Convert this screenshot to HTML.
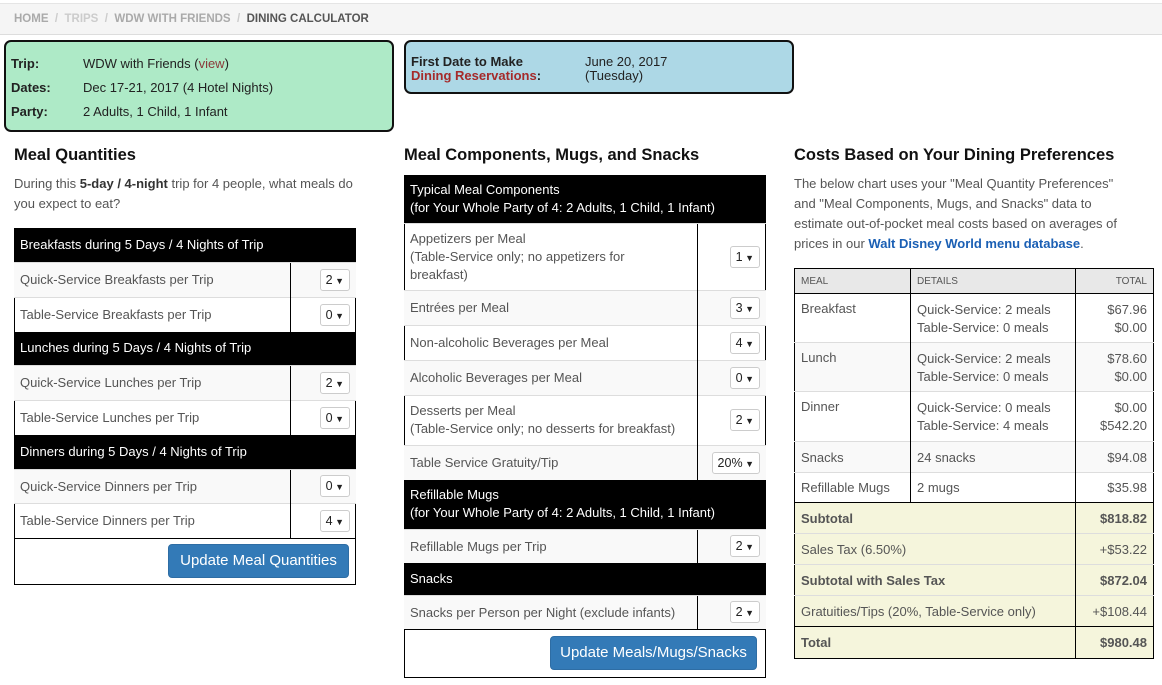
<!DOCTYPE html>
<html><head><meta charset="utf-8"><style>
*{box-sizing:border-box;margin:0;padding:0}
body{width:1162px;height:685px;overflow:hidden;background:#fff;font-family:"Liberation Sans",Arial,sans-serif;font-size:13px;color:#555;position:relative}
.a{position:absolute}
.bc{left:0;top:3px;width:1162px;height:32px;background:#f5f5f5;border-top:1px solid #e5e5e5;border-bottom:1px solid #ddd;font-size:11.5px;font-weight:bold;color:#aaa;padding:9px 0 0 14px;letter-spacing:0}
.bc b{color:#555}.bc .l{color:#ccc}
.box{border:2px solid #111;border-radius:7px;color:#222}
h2{position:absolute;font-size:16.5px;color:#111;font-weight:bold;top:146px}
.p{line-height:20px;color:#555}
table{border-collapse:collapse;position:absolute;table-layout:fixed}
td{vertical-align:middle;padding:0 6px}
.t td{border-top:1px solid #ddd}
tr.h td{background:#000;color:#fff;border:none;padding:0 6px;line-height:18px}
.sel{display:inline-block;border:1px solid #ccc;border-radius:3px;height:22px;line-height:20px;padding:0 5px;color:#222;background:#fff;font-size:12.5px;white-space:nowrap}
.sel:after{content:" \25BC";font-size:9px}
.btn{position:absolute;background:#337ab7;border:1px solid #2e6da4;border-radius:4px;color:#fff;font-size:15px;text-align:center;line-height:32px}
.c td.s{border-left:1px solid #000;text-align:right;padding-right:6px}
tr.g td{background:#f9f9f9}
.k td{border-top:1px solid #ddd;vertical-align:top;padding:7px 6px 0}
.k td+td{border-left:1px solid #000}
.k tr.y td{background:#f5f5dc;vertical-align:middle;padding-top:0}
</style></head><body>
<div class="a bc">HOME &nbsp;<span class="l">/</span>&nbsp; <span style="color:#ccc">TRIPS</span> &nbsp;<span class="l">/</span>&nbsp; WDW WITH FRIENDS &nbsp;<span class="l">/</span>&nbsp; <b>DINING CALCULATOR</b></div>

<div class="a box" style="left:4px;top:40px;width:390px;height:92px;background:#aeeac7">
<div class="a" style="left:5px;top:14px;font-weight:bold">Trip:</div><div class="a" style="left:77px;top:14px">WDW with Friends (<span style="color:#8b3a3a">view</span>)</div>
<div class="a" style="left:5px;top:38px;font-weight:bold">Dates:</div><div class="a" style="left:77px;top:38px">Dec 17-21, 2017 (4 Hotel Nights)</div>
<div class="a" style="left:5px;top:62px;font-weight:bold">Party:</div><div class="a" style="left:77px;top:62px">2 Adults, 1 Child, 1 Infant</div>
</div>
<div class="a box" style="left:404px;top:40px;width:390px;height:54px;background:#add8e6">
<div class="a" style="left:5px;top:13px;font-weight:bold;line-height:14px">First Date to Make<br><span style="color:#a52a2a">Dining Reservations</span>:</div>
<div class="a" style="left:179px;top:13px;line-height:14px">June 20, 2017<br>(Tuesday)</div>
</div>

<h2 style="left:14px">Meal Quantities</h2>
<h2 style="left:404px">Meal Components, Mugs, and Snacks</h2>
<h2 style="left:794px">Costs Based on Your Dining Preferences</h2>

<div class="a p" style="left:14px;top:174px;width:370px">During this <b style="color:#333">5-day / 4-night</b> trip for 4 people, what meals do<br>you expect to eat?</div>

<div class="a" style="left:14px;top:228px;width:342px;height:357px;border:1px solid #000"></div>
<table class="t c" style="left:14px;top:228px;width:342px">
<col style="width:276px"><col>
<tr class="h" style="height:34px"><td colspan="2">Breakfasts during 5 Days / 4 Nights of Trip</td></tr>
<tr class="g" style="height:35px"><td>Quick-Service Breakfasts per Trip</td><td class="s"><span class="sel">2</span></td></tr>
<tr style="height:35px"><td>Table-Service Breakfasts per Trip</td><td class="s"><span class="sel">0</span></td></tr>
<tr class="h" style="height:33px"><td colspan="2">Lunches during 5 Days / 4 Nights of Trip</td></tr>
<tr class="g" style="height:35px"><td>Quick-Service Lunches per Trip</td><td class="s"><span class="sel">2</span></td></tr>
<tr style="height:35px"><td>Table-Service Lunches per Trip</td><td class="s"><span class="sel">0</span></td></tr>
<tr class="h" style="height:34px"><td colspan="2">Dinners during 5 Days / 4 Nights of Trip</td></tr>
<tr class="g" style="height:34px"><td>Quick-Service Dinners per Trip</td><td class="s"><span class="sel">0</span></td></tr>
<tr style="height:35px"><td>Table-Service Dinners per Trip</td><td class="s"><span class="sel">4</span></td></tr>
</table>
<div class="a" style="left:14px;top:538px;width:342px;border-top:1px solid #000"></div>
<div class="btn" style="left:168px;top:544px;width:181px;height:34px">Update Meal Quantities</div>

<div class="a" style="left:404px;top:175px;width:362px;height:503px;border:1px solid #000"></div>
<table class="t c" style="left:404px;top:175px;width:362px">
<col style="width:293px"><col>
<tr class="h" style="height:48px"><td colspan="2">Typical Meal Components<br>(for Your Whole Party of 4: 2 Adults, 1 Child, 1 Infant)</td></tr>
<tr style="height:67px"><td style="line-height:18px">Appetizers per Meal<br>(Table-Service only; no appetizers for<br>breakfast)</td><td class="s"><span class="sel">1</span></td></tr>
<tr class="g" style="height:35px"><td>Entrées per Meal</td><td class="s"><span class="sel">3</span></td></tr>
<tr style="height:35px"><td>Non-alcoholic Beverages per Meal</td><td class="s"><span class="sel">4</span></td></tr>
<tr class="g" style="height:35px"><td>Alcoholic Beverages per Meal</td><td class="s"><span class="sel">0</span></td></tr>
<tr style="height:50px"><td style="line-height:18px">Desserts per Meal<br>(Table-Service only; no desserts for breakfast)</td><td class="s"><span class="sel">2</span></td></tr>
<tr class="g" style="height:35px"><td>Table Service Gratuity/Tip</td><td class="s"><span class="sel">20%</span></td></tr>
<tr class="h" style="height:49px"><td colspan="2">Refillable Mugs<br>(for Your Whole Party of 4: 2 Adults, 1 Child, 1 Infant)</td></tr>
<tr class="g" style="height:34px"><td>Refillable Mugs per Trip</td><td class="s"><span class="sel">2</span></td></tr>
<tr class="h" style="height:32px"><td colspan="2">Snacks</td></tr>
<tr class="g" style="height:34px"><td>Snacks per Person per Night (exclude infants)</td><td class="s"><span class="sel">2</span></td></tr>
</table>
<div class="a" style="left:404px;top:629px;width:362px;border-top:1px solid #000"></div>
<div class="btn" style="left:550px;top:636px;width:207px;height:34px">Update Meals/Mugs/Snacks</div>

<div class="a p" style="left:794px;top:174px;width:360px">The below chart uses your "Meal Quantity Preferences"<br>and "Meal Components, Mugs, and Snacks" data to<br>estimate out-of-pocket meal costs based on averages of<br>prices in our <b style="color:#1a5fb4">Walt Disney World menu database</b>.</div>

<table class="k" style="left:794px;top:268px;width:360px;border:1px solid #000">
<col style="width:116px"><col style="width:165px"><col>
<tr style="height:25px"><td style="background:#e8e8e8;font-size:10px;padding-top:0;vertical-align:middle;border-top:none">MEAL</td><td style="background:#e8e8e8;font-size:10px;padding-top:0;vertical-align:middle;border-top:none">DETAILS</td><td style="background:#e8e8e8;font-size:10px;padding-top:0;vertical-align:middle;text-align:right;border-top:none">TOTAL</td></tr>
<tr style="height:49px;border-top:1px solid #000"><td style="border-top:1px solid #000">Breakfast</td><td style="border-top:1px solid #000;line-height:18px">Quick-Service: 2 meals<br>Table-Service: 0 meals</td><td style="border-top:1px solid #000;text-align:right;line-height:18px">$67.96<br>$0.00</td></tr>
<tr class="g" style="height:49px"><td>Lunch</td><td style="line-height:18px">Quick-Service: 2 meals<br>Table-Service: 0 meals</td><td style="text-align:right;line-height:18px">$78.60<br>$0.00</td></tr>
<tr style="height:50px"><td>Dinner</td><td style="line-height:18px">Quick-Service: 0 meals<br>Table-Service: 4 meals</td><td style="text-align:right;line-height:18px">$0.00<br>$542.20</td></tr>
<tr class="g" style="height:31px"><td style="vertical-align:middle;padding-top:0">Snacks</td><td style="vertical-align:middle;padding-top:0">24 snacks</td><td style="text-align:right;vertical-align:middle;padding-top:0">$94.08</td></tr>
<tr style="height:30px"><td style="vertical-align:middle;padding-top:0">Refillable Mugs</td><td style="vertical-align:middle;padding-top:0">2 mugs</td><td style="text-align:right;vertical-align:middle;padding-top:0">$35.98</td></tr>
<tr class="y" style="height:31px"><td colspan="2" style="border-top:1px solid #000;font-weight:bold">Subtotal</td><td style="border-top:1px solid #000;text-align:right;font-weight:bold">$818.82</td></tr>
<tr class="y" style="height:31px"><td colspan="2">Sales Tax (6.50%)</td><td style="text-align:right">+$53.22</td></tr>
<tr class="y" style="height:31px"><td colspan="2" style="font-weight:bold">Subtotal with Sales Tax</td><td style="text-align:right;font-weight:bold">$872.04</td></tr>
<tr class="y" style="height:31px"><td colspan="2">Gratuities/Tips (20%, Table-Service only)</td><td style="text-align:right">+$108.44</td></tr>
<tr class="y" style="height:32px"><td colspan="2" style="border-top:1px solid #000;font-weight:bold">Total</td><td style="border-top:1px solid #000;text-align:right;font-weight:bold">$980.48</td></tr>
</table>
</body></html>
